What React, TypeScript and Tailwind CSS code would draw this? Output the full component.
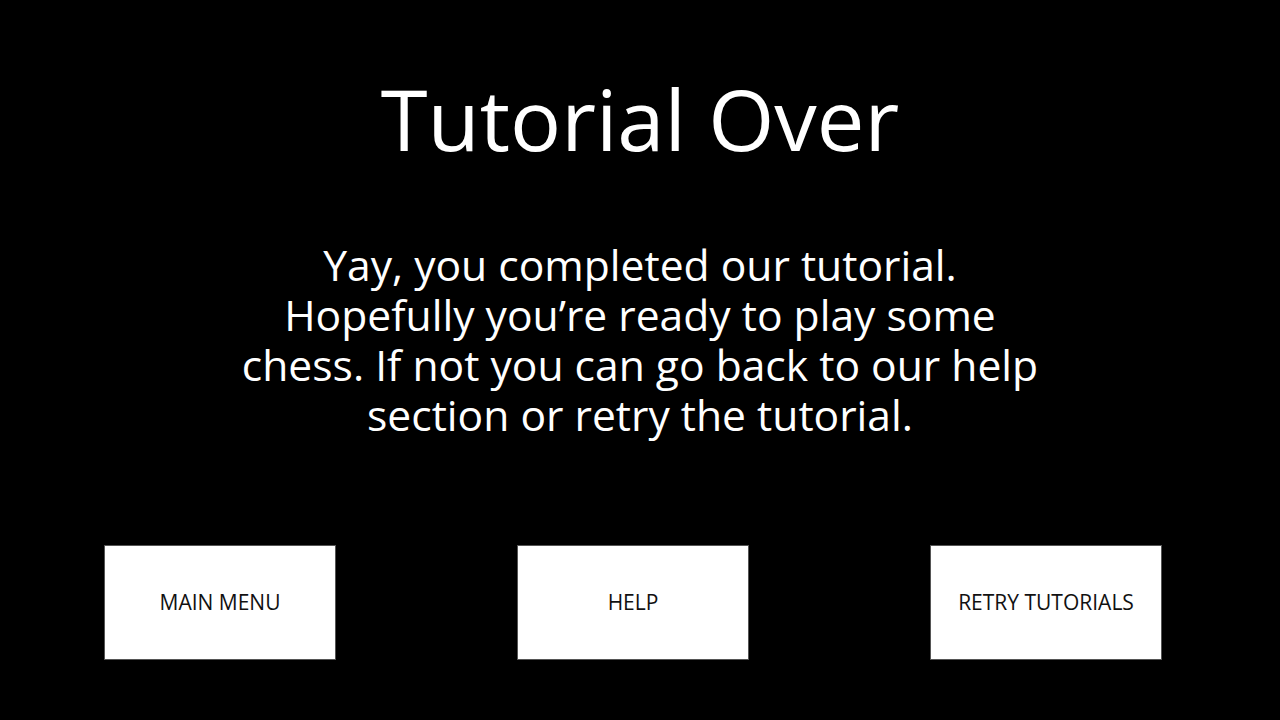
export default function App() {
  const buttons = ["MAIN MENU", "HELP", "RETRY TUTORIALS"];

  return (
    <main className="flex h-[720px] w-[1280px] flex-col items-center bg-black font-['Open_Sans',sans-serif] text-white">
      <h1 className="mt-[66px] text-[85px] leading-[104px]">Tutorial Over</h1>

      <p className="mt-[69px] text-center text-[42.6px] leading-[50px]">
        Yay, you completed our tutorial.
        <br />
        Hopefully you’re ready to play some
        <br />
        chess. If not you can go back to our help
        <br />
        section or retry the tutorial.
      </p>

      <div className="mt-[106px] flex w-full gap-[181px] pl-[104px]">
        {buttons.map((label) => (
          <button
            key={label}
            className="flex h-[115px] w-[232px] items-center justify-center border border-[#555] bg-white text-[21px] text-[#111]"
          >
            {label}
          </button>
        ))}
      </div>
    </main>
  );
}
